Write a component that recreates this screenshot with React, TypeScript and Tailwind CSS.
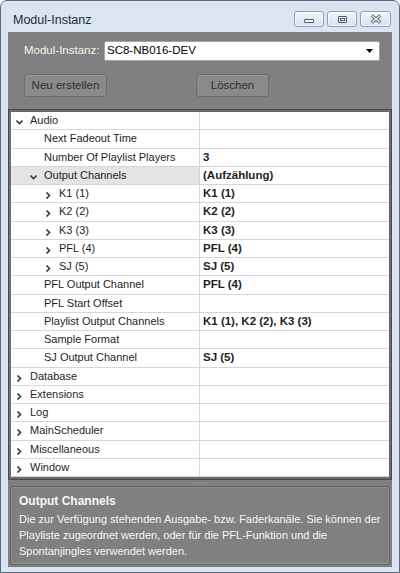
import React from 'react';

type Row = {
  label: string;
  value?: string;
  level: number;
  toggle?: 'open' | 'closed';
  selected?: boolean;
};

const rows: Row[] = [
  { label: 'Audio', level: 0, toggle: 'open' },
  { label: 'Next Fadeout Time', level: 1 },
  { label: 'Number Of Playlist Players', value: '3', level: 1 },
  { label: 'Output Channels', value: '(Aufzählung)', level: 1, toggle: 'open', selected: true },
  { label: 'K1 (1)', value: 'K1 (1)', level: 2, toggle: 'closed' },
  { label: 'K2 (2)', value: 'K2 (2)', level: 2, toggle: 'closed' },
  { label: 'K3 (3)', value: 'K3 (3)', level: 2, toggle: 'closed' },
  { label: 'PFL (4)', value: 'PFL (4)', level: 2, toggle: 'closed' },
  { label: 'SJ (5)', value: 'SJ (5)', level: 2, toggle: 'closed' },
  { label: 'PFL Output Channel', value: 'PFL (4)', level: 1 },
  { label: 'PFL Start Offset', level: 1 },
  { label: 'Playlist Output Channels', value: 'K1 (1), K2 (2), K3 (3)', level: 1 },
  { label: 'Sample Format', level: 1 },
  { label: 'SJ Output Channel', value: 'SJ (5)', level: 1 },
  { label: 'Database', level: 0, toggle: 'closed' },
  { label: 'Extensions', level: 0, toggle: 'closed' },
  { label: 'Log', level: 0, toggle: 'closed' },
  { label: 'MainScheduler', level: 0, toggle: 'closed' },
  { label: 'Miscellaneous', level: 0, toggle: 'closed' },
  { label: 'Window', level: 0, toggle: 'closed' },
];

// text offsets per tree level, measured from the grid's inner left edge
const indent = ['pl-[19px]', 'pl-[33px]', 'pl-[48px]'];

const Chevron = ({ open }: { open: boolean }) => (
  <svg width="7" height="7" viewBox="0 0 7 7" className="absolute left-[-14px] top-[5px]">
    {open ? (
      <path d="M0.5 1.5 L3.5 4.5 L6.5 1.5" fill="none" stroke="#3a3a3a" strokeWidth="1.6" />
    ) : (
      <path d="M1.5 0.5 L4.5 3.5 L1.5 6.5" fill="none" stroke="#3a3a3a" strokeWidth="1.6" />
    )}
  </svg>
);

const CaptionButton = ({ children, wide }: { children: React.ReactNode; wide?: boolean }) => (
  <div
    className={`${wide ? 'w-[31px]' : 'w-[30px]'} h-[16px] flex items-center justify-center rounded-[3px] border border-[#8c9fb8] bg-gradient-to-b from-[#f1f5fa] to-[#d6e1ee] shadow-[inset_0_0_0_1px_rgba(255,255,255,0.6)]`}
  >
    {children}
  </div>
);

export default function App() {
  return (
    <div
      className="w-[400px] h-[573px] flex flex-col border border-[#5b6b7d] rounded-t-[7px] bg-[#dae5f1] px-[7px] pb-[5px]"
      style={{ fontFamily: '"Liberation Sans", Arial, sans-serif' }}
    >
      {/* title bar */}
      <div className="h-[31px] flex items-start shrink-0">
        <span className="mt-[10px] ml-[5px] text-[12.5px] text-[#1f2a36]">Modul-Instanz</span>
        <div className="ml-auto mt-[10px] mr-[1px] flex gap-[3px]">
          <CaptionButton>
            <div className="w-[10px] h-[4px] border border-[#4f5a66] bg-white rounded-[1px] mt-[4px]" />
          </CaptionButton>
          <CaptionButton>
            <div className="w-[9px] h-[7px] border border-[#4f5a66] rounded-[1px] flex items-center justify-center">
              <div className="w-[5px] h-[3px] border border-[#4f5a66] bg-white" />
            </div>
          </CaptionButton>
          <CaptionButton wide>
            <svg width="12" height="10" viewBox="0 0 12 10">
              <path d="M1.5 1.5 L10.5 8.5 M10.5 1.5 L1.5 8.5" stroke="#4f5a66" strokeWidth="3" />
              <path d="M1.5 1.5 L10.5 8.5 M10.5 1.5 L1.5 8.5" stroke="#ffffff" strokeWidth="1.2" />
            </svg>
          </CaptionButton>
        </div>
      </div>

      {/* client area */}
      <div className="flex-1 flex flex-col bg-[#808080] text-[11px]">
        <div className="flex items-center pt-[9px] pl-[16px] pr-[12px]">
          <span className="w-[80px] text-[#f7f3e8] text-[11.5px]">Modul-Instanz:</span>
          <div className="relative flex-1 h-[20px] bg-white rounded-[2px] border border-[#a5a5a5] flex items-center pl-[2px] text-[11.5px] text-black">
            SC8-NB016-DEV
            <svg width="7" height="4" viewBox="0 0 7 4" className="absolute right-[6px] top-[7px]">
              <path d="M0 0 H7 L3.5 4 Z" fill="#000" />
            </svg>
          </div>
        </div>

        <div className="flex pt-[13px] pl-[16px]">
          <button className="w-[83px] h-[23px] rounded-[3px] border border-[#6c6c6c] bg-[#8a8a8a] text-[11.5px] text-[#2e2e2e] shadow-[inset_0_1px_0_rgba(255,255,255,0.15)]">
            Neu erstellen
          </button>
          <button className="ml-[89px] w-[73px] h-[23px] rounded-[3px] border border-[#6c6c6c] bg-[#8a8a8a] text-[11.5px] text-[#2e2e2e] shadow-[inset_0_1px_0_rgba(255,255,255,0.15)]">
            Löschen
          </button>
        </div>

        {/* property grid */}
        <div className="mt-[12px] border border-[#4a4a4a]">
          <div className="border-2 border-[#6a6a6a] border-l-[#707070]">
            <div className="bg-white">
              {rows.map((r, i) => (
                <div key={i} className="flex h-[18.25px] border-b border-[#d6d6d6] leading-[17px]">
                  <div
                    className={`relative w-[189px] shrink-0 border-r border-[#d6d6d6] ${indent[r.level]} text-[#1e1e1e] ${
                      r.selected ? 'bg-[#e4e4e4]' : ''
                    }`}
                  >
                    <span className="relative">
                      {r.toggle && <Chevron open={r.toggle === 'open'} />}
                      {r.label}
                    </span>
                  </div>
                  <div className="flex-1 pl-[3px] font-bold text-[11.5px] text-[#1e1e1e]">{r.value}</div>
                </div>
              ))}
            </div>
          </div>
        </div>

        {/* splitter grip */}
        <div className="h-[6px] flex items-center justify-center gap-[2px]">
          {[0, 1, 2, 3].map(d => (
            <div key={d} className="w-[1px] h-[1px] bg-[#b5b5b5]" />
          ))}
        </div>

        {/* help panel */}
        <div className="mx-[2px] h-[79px] rounded-[3px] border border-[#666666] shadow-[inset_0_0_0_1px_rgba(255,255,255,0.12)] px-[8px] pt-[6px] text-[#f7f7f7]">
          <div className="font-bold text-[12px] leading-[16px]">Output Channels</div>
          <p className="mt-[2px] leading-[16px] text-[11px] whitespace-nowrap">
            Die zur Verfügung stehenden Ausgabe- bzw. Faderkanäle. Sie können der
            <br />
            Playliste zugeordnet werden, oder für die PFL-Funktion und die
            <br />
            Spontanjingles verwendet werden.
          </p>
        </div>
      </div>
    </div>
  );
}
